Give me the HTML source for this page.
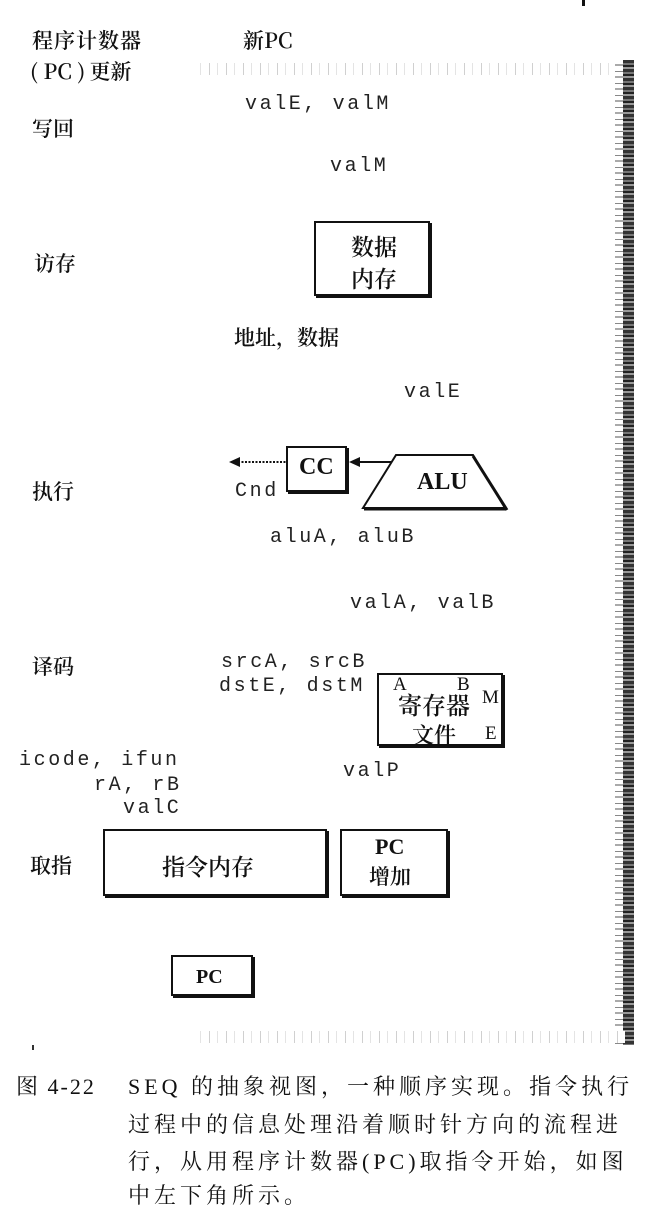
<!DOCTYPE html>
<html><head><meta charset="utf-8"><style>
html,body{margin:0;padding:0;background:#fff;}
body{width:666px;height:1199px;position:relative;overflow:hidden;color:#111;}
.t{position:absolute;white-space:nowrap;line-height:1;}
.cj{font-family:"Noto Serif CJK SC","Liberation Serif",serif;font-size:21px;font-weight:600;}
.m{font-family:"Liberation Mono",monospace;font-size:20px;letter-spacing:2.6px;color:#222;}
.box{position:absolute;border:2px solid #111;box-shadow:2px 2px 0 #111;background:#fff;}
.b{font-family:"Liberation Serif",serif;font-weight:bold;}
.cap{font-family:"Liberation Serif","Noto Serif CJK SC",serif;font-size:22px;letter-spacing:4px;position:absolute;white-space:nowrap;line-height:1;}
.bar{position:absolute;left:615px;top:60px;width:19px;height:985px;
background:repeating-linear-gradient(180deg,#333 0 3px,#777 3px 5px,#222 5px 7px,#999 7px 9px);}
.bar:before{content:"";position:absolute;left:0;top:0;width:8px;height:100%;background:repeating-linear-gradient(180deg,#fff 0 4px,#aaa 4px 6px,#fff 6px 11px,#888 11px 12px);}
.noise{position:absolute;height:12px;background:repeating-linear-gradient(90deg,#e4e4e4 0 1px,#fff 1px 9px,#d0d0d0 9px 10px,#fff 10px 17px);}
</style></head><body>
<div class="t" style="left:582px;top:0;width:3px;height:6px;background:#111"></div>

<div class="t cj" style="left:32px;top:30px;letter-spacing:1px;">程序计数器</div>
<div class="t cj" style="left:30px;top:61px;">(&nbsp;PC&nbsp;)&thinsp;更新</div>
<div class="t cj" style="left:243px;top:30px;">新PC</div>
<div class="noise" style="left:200px;top:63px;width:413px;"></div>
<div class="bar"></div>
<div class="noise" style="left:200px;top:1031px;width:425px;"></div>

<div class="t m" style="left:245px;top:95px;">valE, valM</div>
<div class="t cj" style="left:32px;top:118px;">写回</div>
<div class="t m" style="left:330px;top:157px;">valM</div>

<div class="box" style="left:314px;top:221px;width:112px;height:71px;"></div>
<div class="t cj" style="left:351px;top:234px;font-size:23px;">数据</div>
<div class="t cj" style="left:351px;top:266px;font-size:23px;">内存</div>
<div class="t cj" style="left:34px;top:253px;">访存</div>

<div class="t cj" style="left:234px;top:327px;">地址，数据</div>
<div class="t m" style="left:404px;top:383px;">valE</div>

<div class="box" style="left:286px;top:446px;width:57px;height:42px;"></div>
<div class="t b" style="left:299px;top:455px;font-size:24px;">CC</div>
<svg style="position:absolute;left:0;top:0" width="666" height="560">
<line x1="238" y1="462" x2="286" y2="462" stroke="#111" stroke-width="2" stroke-dasharray="2,1.5"/>
<polygon points="229,462 240,457 240,467" fill="#111"/>
<line x1="358" y1="462" x2="398" y2="462" stroke="#111" stroke-width="2"/>
<polygon points="349,462 360,457 360,467" fill="#111"/>
<polygon points="396,455 473,455 505,508 363,508" fill="#fff" stroke="#111" stroke-width="2"/>
<line x1="473" y1="456" x2="507" y2="510" stroke="#111" stroke-width="3"/>
<line x1="364" y1="509" x2="506" y2="509" stroke="#111" stroke-width="3"/>
</svg>
<div class="t b" style="left:417px;top:470px;font-size:24px;">ALU</div>
<div class="t m" style="left:235px;top:482px;">Cnd</div>
<div class="t cj" style="left:32px;top:481px;">执行</div>

<div class="t m" style="left:270px;top:528px;">aluA, aluB</div>
<div class="t m" style="left:350px;top:594px;">valA, valB</div>

<div class="t cj" style="left:32px;top:656px;">译码</div>
<div class="t m" style="left:221px;top:653px;">srcA, srcB</div>
<div class="t m" style="left:219px;top:677px;">dstE, dstM</div>

<div class="box" style="left:377px;top:673px;width:122px;height:69px;"></div>
<div class="t" style="left:393px;top:675px;font-family:'Liberation Serif',serif;font-size:19px;">A</div>
<div class="t" style="left:457px;top:675px;font-family:'Liberation Serif',serif;font-size:19px;">B</div>
<div class="t" style="left:482px;top:688px;font-family:'Liberation Serif',serif;font-size:19px;">M</div>
<div class="t" style="left:485px;top:724px;font-family:'Liberation Serif',serif;font-size:19px;">E</div>
<div class="t cj" style="left:398px;top:692px;font-size:24px;">寄存器</div>
<div class="t cj" style="left:412px;top:724px;font-size:22px;">文件</div>

<div class="t m" style="left:19px;top:751px;">icode, ifun</div>
<div class="t m" style="left:94px;top:776px;">rA, rB</div>
<div class="t m" style="left:123px;top:799px;">valC</div>
<div class="t m" style="left:343px;top:762px;">valP</div>

<div class="box" style="left:103px;top:829px;width:220px;height:63px;"></div>
<div class="t cj" style="left:162px;top:854px;font-size:23px;">指令内存</div>
<div class="t cj" style="left:30px;top:855px;">取指</div>
<div class="box" style="left:340px;top:829px;width:104px;height:63px;"></div>
<div class="t b" style="left:375px;top:836px;font-size:22px;">PC</div>
<div class="t cj" style="left:369px;top:866px;">增加</div>

<div class="box" style="left:171px;top:955px;width:78px;height:37px;"></div>
<div class="t b" style="left:196px;top:967px;font-size:20px;">PC</div>
<div class="t" style="left:32px;top:1045px;width:2px;height:5px;background:#333"></div>

<div class="cap" style="left:16px;top:1076px;letter-spacing:2px;">图 4-22</div>
<div class="cap" style="left:128px;top:1076px;">SEQ 的抽象视图，一种顺序实现。指令执行</div>
<div class="cap" style="left:128px;top:1114px;">过程中的信息处理沿着顺时针方向的流程进</div>
<div class="cap" style="left:128px;top:1151px;">行，从用程序计数器(PC)取指令开始，如图</div>
<div class="cap" style="left:128px;top:1185px;">中左下角所示。</div>
</body></html>
